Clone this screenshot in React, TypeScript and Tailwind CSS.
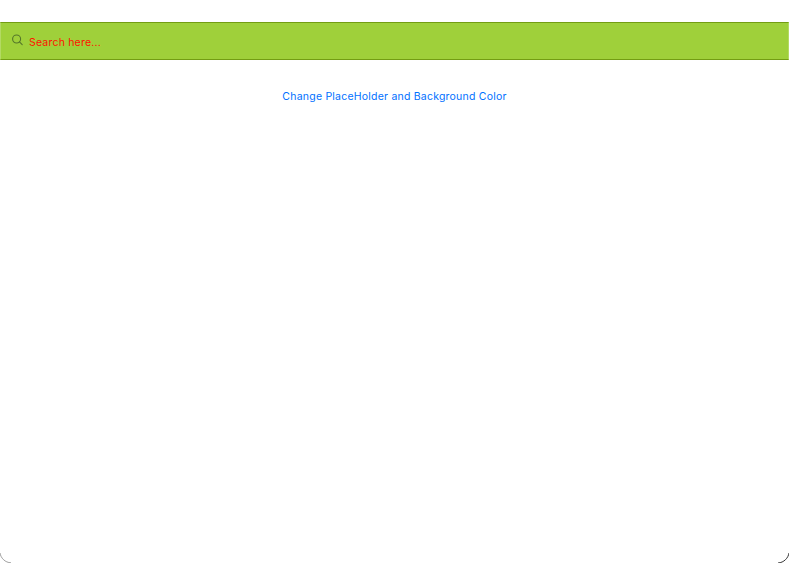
export default function App() {
  return (
    <main className="relative flex h-[563px] w-[789px] flex-col overflow-hidden bg-white pt-[22px] font-['Inter','Liberation_Sans',sans-serif]">
      <div className="flex h-[38px] shrink-0 items-center border border-x-[#b3da63] border-y-[#739d13] bg-[#9fd03a] pl-[11px]">
        <svg className="mr-[5px] -mt-[2px] h-[12px] w-[12px] text-[#54762a]" viewBox="0 0 12 12" fill="none" stroke="currentColor" strokeWidth="1.1" strokeLinecap="round">
          <circle cx="4.6" cy="5" r="4" />
          <path d="M7.5 7.9 10.2 10.6" />
        </svg>
        <input
          type="text"
          placeholder="Search here..."
          className="mt-[4px] h-[20px] w-[740px] bg-transparent text-[10.5px] leading-[20px] tracking-[0.2px] text-[#ff1000] outline-none placeholder:text-[#ff1000] placeholder:opacity-100"
        />
      </div>
      <button type="button" className="mt-[27px] h-[20px] self-center text-[10.5px] leading-[20px] tracking-[0.22px] whitespace-nowrap text-[#0070ff]">
        Change PlaceHolder and Background Color
      </button>
      <svg className="absolute bottom-0 left-0 h-[12px] w-[12px]" viewBox="0 0 12 12" fill="none" stroke="#777" strokeWidth="0.7">
        <path d="M0 2C.8 7 5 11.6 11 11.8" />
      </svg>
      <svg className="absolute right-0 bottom-0 h-[12px] w-[12px]" viewBox="0 0 12 12">
        <path d="M12 2C11.2 7 7 11.6 1 12" fill="none" stroke="#333" strokeWidth="1" />
      </svg>
    </main>
  );
}
